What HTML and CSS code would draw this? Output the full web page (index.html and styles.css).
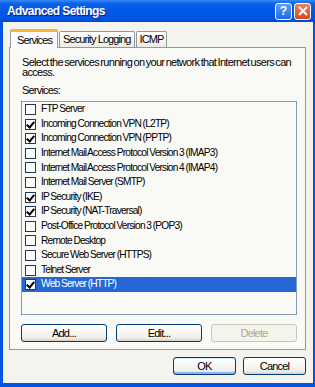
FILE: index.html
```html
<!DOCTYPE html>
<html lang="en">
<head>
  <title>Advanced Settings</title>
  <link rel="stylesheet" href="styles.css">
</head>
<body>
  <div class="window">
    <div class="titlebar">
      <span class="title">Advanced Settings</span>
      <span class="tb-btn help">?</span>
      <span class="tb-btn close">
        <svg width="10" height="10" viewBox="0 0 10 10"><path d="M1 1 L9 9 M9 1 L1 9" stroke="#fff" stroke-width="2"/></svg>
      </span>
    </div>

    <div class="frame">
      <div class="tabs">
        <div class="tab active">Services</div>
        <div class="tab">Security Logging</div>
        <div class="tab">ICMP</div>
      </div>

      <div class="panel">
        <p class="intro">Select the services running on your network that Internet users can access.</p>
        <div class="label">Services:</div>
        <ul class="list">
          <li><span class="check"></span>FTP Server</li>
          <li><span class="check on"></span>Incoming Connection VPN (L2TP)</li>
          <li><span class="check on"></span>Incoming Connection VPN (PPTP)</li>
          <li><span class="check"></span>Internet Mail Access Protocol Version 3 (IMAP3)</li>
          <li><span class="check"></span>Internet Mail Access Protocol Version 4 (IMAP4)</li>
          <li><span class="check"></span>Internet Mail Server (SMTP)</li>
          <li><span class="check on"></span>IP Security (IKE)</li>
          <li><span class="check on"></span>IP Security (NAT-Traversal)</li>
          <li><span class="check"></span>Post-Office Protocol Version 3 (POP3)</li>
          <li><span class="check"></span>Remote Desktop</li>
          <li><span class="check"></span>Secure Web Server (HTTPS)</li>
          <li><span class="check"></span>Telnet Server</li>
          <li class="selected"><span class="check on"></span>Web Server (HTTP)</li>
        </ul>
        <div class="list-buttons">
          <button class="btn">Add...</button>
          <button class="btn">Edit...</button>
          <button class="btn" disabled>Delete</button>
        </div>
      </div>

      <div class="footer">
        <button class="btn small default">OK</button>
        <button class="btn small">Cancel</button>
      </div>
    </div>
  </div>
</body>
</html>
```

FILE: styles.css
```css
body {
  margin: 0;
  font-family: "Liberation Sans", Arial, sans-serif;
  font-size: 11px;
  color: #000;
}

.window {
  width: 315px;
  height: 387px;
  display: flex;
  flex-direction: column;
  background-color: #0055e5;
}

.titlebar {
  height: 22px;
  display: flex;
  align-items: center;
  padding: 0 4px 0 7px;
  background: linear-gradient(#3b8cf5 0%, #0a62ea 15%, #0058e6 50%, #0054e3 85%, #0048d0 100%);
}

.title {
  flex: 1;
  color: #fff;
  font-weight: bold;
  font-size: 12px;
  letter-spacing: -0.6px;
  text-shadow: 1px 1px 0 #0a1e8a;
}

.tb-btn {
  width: 15px;
  height: 15px;
  border: 1px solid #fff;
  border-radius: 3px;
  margin-left: 2px;
  display: flex;
  align-items: center;
  justify-content: center;
  color: #fff;
  font-weight: bold;
  font-size: 12px;
}

.help {
  background: linear-gradient(#5c9cf6, #2468e8);
}

.close {
  background: linear-gradient(#ee8060, #d8481e);
}

.frame {
  flex: 1;
  margin: 0 2px 4px 3px;
  padding: 7px 7px 0 6px;
  background-color: #f4f3ee;
  display: flex;
  flex-direction: column;
}

.tabs {
  display: flex;
  align-items: flex-end;
  height: 18px;
  padding-left: 1px;
}

.tab {
  height: 15px;
  line-height: 15px;
  padding: 0 3px;
  border: 1px solid #919b9c;
  border-bottom: none;
  border-radius: 2px 2px 0 0;
  background: linear-gradient(#ffffff, #ecebe6);
  margin-right: 1px;
  letter-spacing: -0.9px;
}

.tab.active {
  height: 16px;
  line-height: 16px;
  padding: 0 5px 0 6px;
  border-top: 3px solid #f5b43e;
  background: #fcfcfe;
  margin-bottom: -1px;
  position: relative;
  z-index: 1;
}

.panel {
  height: 301px;
  border: 1px solid #919b9c;
  background-color: #f9f9f6;
  padding: 0 8px 0 11px;
  display: flex;
  flex-direction: column;
}

.intro {
  margin: 10px 0 0 1px;
  line-height: 9.6px;
  letter-spacing: -0.7px;
  word-spacing: -1px;
}

.label {
  margin: 8px 0 0 1px;
  line-height: 10px;
  letter-spacing: -0.8px;
}

.list {
  list-style: none;
  margin: 6px 0 0 0;
  padding: 0;
  height: 212px;
  border: 1px solid #7f9db9;
  background-color: #f9f9f6;
}

.list li {
  height: 14.6px;
  line-height: 14.6px;
  display: flex;
  align-items: center;
  padding-left: 3px;
  font-size: 10.2px;
  letter-spacing: -0.8px;
  word-spacing: -0.5px;
  white-space: nowrap;
}

.list li.selected {
  background-color: #2568d5;
  color: #fff;
}

.check {
  width: 9px;
  height: 9px;
  border: 1px solid #1c3a5c;
  background-color: #fcfcfc;
  margin-right: 5px;
  position: relative;
  flex: none;
}

.check.on::after {
  content: "";
  position: absolute;
  left: 2px;
  top: 0;
  width: 3px;
  height: 6px;
  border: solid #000;
  border-width: 0 2px 2px 0;
  transform: rotate(40deg);
}

.list-buttons {
  display: flex;
  justify-content: space-between;
  margin-top: 9px;
}

.btn {
  width: 86px;
  height: 18px;
  padding: 0;
  font-family: inherit;
  font-size: 11px;
  letter-spacing: -0.8px;
  color: #000;
  border: 1px solid #003c74;
  border-radius: 3px;
  background: linear-gradient(#ffffff, #f0f0ea 80%, #d6d0c5);
}

.btn:disabled {
  border-color: #c9c7ba;
  color: #aca899;
  background: #f5f4ea;
}

.footer {
  display: flex;
  justify-content: flex-end;
  gap: 7px;
  margin-top: 7px;
}

.btn.small {
  width: 63px;
}

.btn.default {
  box-shadow: inset 0 -2px 0 #8cb4f2, inset 0 1px 0 #cee7ff;
}
```
